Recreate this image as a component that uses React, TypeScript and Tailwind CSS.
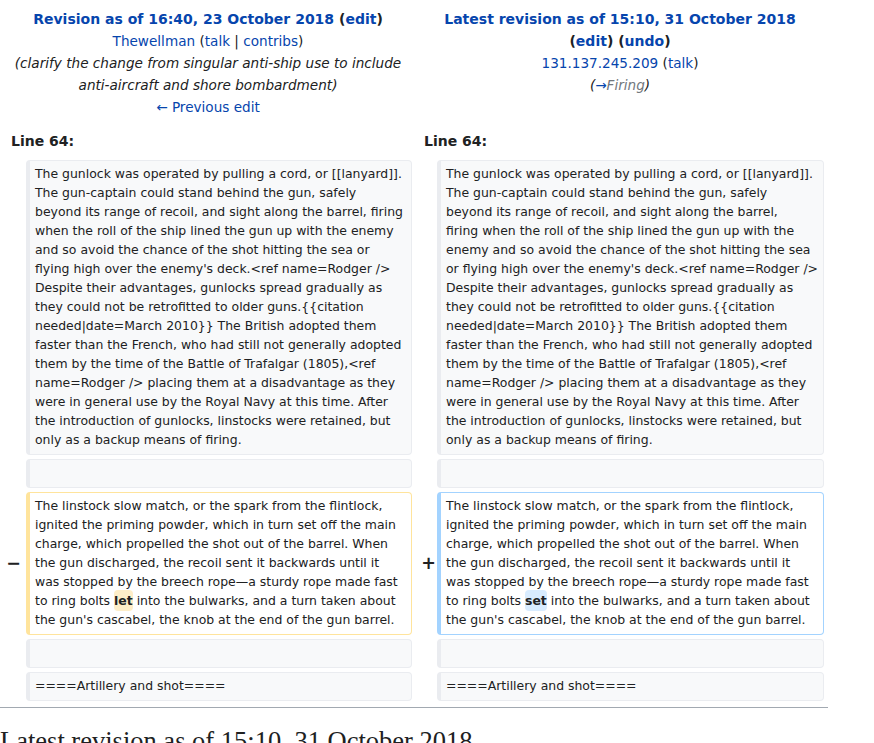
import React from 'react';

type Kind = 'context' | 'deleted' | 'added';

const LEFT_FIRST = [
  'The gunlock was operated by pulling a cord, or [[lanyard]].',
  'The gun-captain could stand behind the gun, safely',
  'beyond its range of recoil, and sight along the barrel, firing',
  'when the roll of the ship lined the gun up with the enemy',
  'and so avoid the chance of the shot hitting the sea or',
  "flying high over the enemy's deck.<ref name=Rodger />",
  'Despite their advantages, gunlocks spread gradually as',
  'they could not be retrofitted to older guns.{{citation',
  'needed|date=March 2010}} The British adopted them',
  'faster than the French, who had still not generally adopted',
  'them by the time of the Battle of Trafalgar (1805),<ref',
  'name=Rodger /> placing them at a disadvantage as they',
  'were in general use by the Royal Navy at this time. After',
  'the introduction of gunlocks, linstocks were retained, but',
  'only as a backup means of firing.',
];

const RIGHT_FIRST = [
  'The gunlock was operated by pulling a cord, or [[lanyard]].',
  'The gun-captain could stand behind the gun, safely',
  'beyond its range of recoil, and sight along the barrel,',
  'firing when the roll of the ship lined the gun up with the',
  'enemy and so avoid the chance of the shot hitting the sea',
  "or flying high over the enemy's deck.<ref name=Rodger />",
  ...LEFT_FIRST.slice(6),
];

const CHANGED_BEFORE = [
  'The linstock slow match, or the spark from the flintlock,',
  'ignited the priming powder, which in turn set off the main',
  'charge, which propelled the shot out of the barrel. When',
  'the gun discharged, the recoil sent it backwards until it',
  'was stopped by the breech rope\u2014a sturdy rope made fast',
];

const CHANGED_AFTER = [
  "the gun's cascabel, the knob at the end of the gun barrel.",
];

const boxStyles: Record<Kind, string> = {
  context: 'bg-[#f8f9fa] border-[#eaecf0]',
  deleted: 'bg-white border-[#ffe49c]',
  added: 'bg-white border-[#a3d3ff]',
};

const DiffBox: React.FC<{ kind: Kind; children?: React.ReactNode }> = ({ kind, children }) => (
  <div
    className={`border border-l-4 rounded-[4px] pl-[5px] pr-[4px] pt-[3px] pb-[5px] min-h-[29px] text-[12.45px] leading-[19px] text-[#202122] ${boxStyles[kind]}`}
  >
    {children}
  </div>
);

const Lines: React.FC<{ lines: string[] }> = ({ lines }) => (
  <>
    {lines.map((l, i) => (
      <div key={i} className="whitespace-pre">
        {l}
      </div>
    ))}
  </>
);

const ChangedLines: React.FC<{ word: string; kind: 'deleted' | 'added' }> = ({ word, kind }) => (
  <>
    <Lines lines={CHANGED_BEFORE} />
    <div className="whitespace-pre">
      {'to ring bolts '}
      <span
        className={`font-bold rounded-[4px] py-[3px] ${kind === 'deleted' ? 'bg-[#feeec8]' : 'bg-[#d8ecff]'}`}
      >
        {word}
      </span>
      {' into the bulwarks, and a turn taken about'}
    </div>
    <Lines lines={CHANGED_AFTER} />
  </>
);

const Marker: React.FC<{ sign?: string; right: string }> = ({ sign, right }) => (
  <div className={`flex items-center justify-end font-bold text-[17.5px] leading-[21px] ${right}`}>{sign}</div>
);

const A: React.FC<{ children: React.ReactNode }> = ({ children }) => (
  <a href="#" className="text-[#0645ad]">
    {children}
  </a>
);

export default function App() {
  return (
    <div className="min-h-[743px] overflow-hidden bg-white font-['DejaVu_Sans',sans-serif] text-[14px] leading-[22px] text-[#202122]">
      <div className="w-[828px] pr-1">
        {/* titles */}
        <div className="grid grid-cols-[412px_412px] pt-[8px]">
          <div className="pl-1 text-center">
            <div className="font-bold">
              <A>Revision as of 16:40, 23 October 2018</A> (<A>edit</A>)
            </div>
            <div className="text-[13.6px]">
              <A>Thewellman</A> (<A>talk</A> | <A>contribs</A>)
            </div>
            <div className="italic text-[13.6px]">
              (clarify the change from singular anti-ship use to include anti-aircraft and shore bombardment)
            </div>
            <div className="text-[13.6px]">
              <A>← Previous edit</A>
            </div>
          </div>
          <div className="pl-1 text-center">
            <div className="font-bold px-6">
              <A>Latest revision as of 15:10, 31 October 2018</A> (<A>edit</A>) (<A>undo</A>)
            </div>
            <div className="text-[13.6px]">
              <A>131.137.245.209</A> (<A>talk</A>)
            </div>
            <div className="italic text-[13.6px]">
              (<A>→</A>
              <span className="text-[#72777d]">Firing</span>)
            </div>
          </div>
        </div>

        {/* diff table */}
        <div className="grid grid-cols-[26px_386px_25px_387px] gap-y-1 mt-[12px] pb-1">
          <div className="col-span-2 pl-[11px] pb-1 font-bold">Line 64:</div>
          <div className="col-span-2 pl-[12px] pb-1 font-bold">Line 64:</div>

          <div />
          <DiffBox kind="context">
            <Lines lines={LEFT_FIRST} />
          </DiffBox>
          <div />
          <DiffBox kind="context">
            <Lines lines={RIGHT_FIRST} />
          </DiffBox>

          <div />
          <DiffBox kind="context" />
          <div />
          <DiffBox kind="context" />

          <Marker sign="−" right="pr-[5px]" />
          <DiffBox kind="deleted">
            <ChangedLines word="let" kind="deleted" />
          </DiffBox>
          <Marker sign="+" right="pr-[1px]" />
          <DiffBox kind="added">
            <ChangedLines word="set" kind="added" />
          </DiffBox>

          <div />
          <DiffBox kind="context" />
          <div />
          <DiffBox kind="context" />

          <div />
          <DiffBox kind="context">
            <Lines lines={['====Artillery and shot====']} />
          </DiffBox>
          <div />
          <DiffBox kind="context">
            <Lines lines={['====Artillery and shot====']} />
          </DiffBox>
        </div>
      </div>
      <hr className="w-[828px] border-0 border-t border-[#a2a9b1] mt-[2px]" />
      <h2 className="mt-[18px] font-['Liberation_Serif',serif] text-[26.5px] leading-[30px] whitespace-nowrap">
        Latest revision as of 15:10, 31 October 2018
      </h2>
    </div>
  );
}
